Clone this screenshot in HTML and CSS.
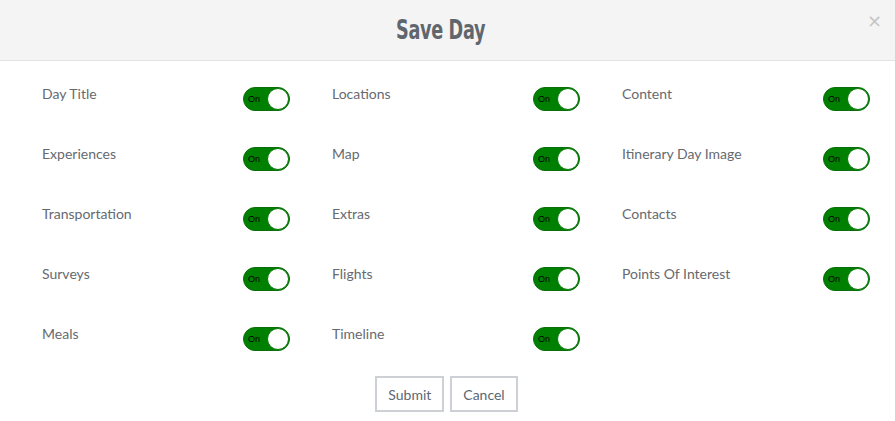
FILE: index.html
```html
<!DOCTYPE html>
<html>
<head>
<meta charset="utf-8">
<link rel="stylesheet" href="styles.css">
</head>
<body>
<div class="modal">
  <div class="header">
    <h1 class="title">Save Day</h1>
    <span class="close">×</span>
  </div>
  <div class="body">
    <div class="grid">
      <div class="item"><span class="label">Day Title</span><span class="toggle"><span class="on">On</span><span class="knob"></span></span></div>
      <div class="item"><span class="label">Locations</span><span class="toggle"><span class="on">On</span><span class="knob"></span></span></div>
      <div class="item"><span class="label">Content</span><span class="toggle"><span class="on">On</span><span class="knob"></span></span></div>
      <div class="item"><span class="label">Experiences</span><span class="toggle"><span class="on">On</span><span class="knob"></span></span></div>
      <div class="item"><span class="label">Map</span><span class="toggle"><span class="on">On</span><span class="knob"></span></span></div>
      <div class="item"><span class="label">Itinerary Day Image</span><span class="toggle"><span class="on">On</span><span class="knob"></span></span></div>
      <div class="item"><span class="label">Transportation</span><span class="toggle"><span class="on">On</span><span class="knob"></span></span></div>
      <div class="item"><span class="label">Extras</span><span class="toggle"><span class="on">On</span><span class="knob"></span></span></div>
      <div class="item"><span class="label">Contacts</span><span class="toggle"><span class="on">On</span><span class="knob"></span></span></div>
      <div class="item"><span class="label">Surveys</span><span class="toggle"><span class="on">On</span><span class="knob"></span></span></div>
      <div class="item"><span class="label">Flights</span><span class="toggle"><span class="on">On</span><span class="knob"></span></span></div>
      <div class="item"><span class="label">Points Of Interest</span><span class="toggle"><span class="on">On</span><span class="knob"></span></span></div>
      <div class="item"><span class="label">Meals</span><span class="toggle"><span class="on">On</span><span class="knob"></span></span></div>
      <div class="item"><span class="label">Timeline</span><span class="toggle"><span class="on">On</span><span class="knob"></span></span></div>
    </div>
    <div class="actions">
      <button class="btn">Submit</button>
      <button class="btn">Cancel</button>
    </div>
  </div>
</div>
</body>
</html>
```
FILE: styles.css
```css
html, body {
  margin: 0;
  padding: 0;
  background: #ffffff;
}
.modal {
  width: 895px;
  height: 421px;
  font-family: Lato, "Liberation Sans", sans-serif;
}
.header {
  position: relative;
  height: 60px;
  background: #f4f4f4;
  border-bottom: 1px solid #e3e3e3;
  display: flex;
  align-items: center;
  justify-content: center;
  padding-right: 13px;
}
.title {
  margin: 0;
  font-family: "DejaVu Sans", sans-serif;
  font-weight: bold;
  font-size: 26px;
  letter-spacing: -0.5px;
  color: #5f666d;
  transform: scaleX(0.68);
}
.close {
  position: absolute;
  right: 13px;
  top: 10px;
  font-size: 18px;
  color: #c4c4c4;
  font-family: "DejaVu Sans", sans-serif;
}
.body {
  padding: 26px 25px 0 42px;
}
.grid {
  display: grid;
  grid-template-columns: repeat(3, 248px);
  column-gap: 42px;
  row-gap: 36px;
}
.item {
  display: flex;
  justify-content: space-between;
  align-items: flex-start;
  height: 24px;
}
.label {
  font-size: 14px;
  color: #666a6f;
  line-height: 16px;
  margin-top: -1px;
}
.toggle {
  width: 47px;
  height: 24px;
  box-sizing: border-box;
  border-radius: 12px;
  background: #008000;
  border: 1px solid #0a6e0a;
  display: flex;
  align-items: center;
  justify-content: space-between;
  padding-left: 4px;
}
.on {
  font-family: "Liberation Sans", Arial, sans-serif;
  font-size: 9px;
  color: #000;
}
.knob {
  width: 22px;
  height: 22px;
  border-radius: 50%;
  background: #fff;
  box-sizing: border-box;
  border: 1px solid #0a7a0a;
}
.actions {
  display: flex;
  justify-content: center;
  gap: 6px;
  margin-top: 25px;
  padding-right: 19px;
}
.btn {
  height: 36px;
  padding: 0 11px;
  background: #fff;
  border: 2px solid #cdd1d5;
  font-family: Lato, "Liberation Sans", sans-serif;
  font-size: 14px;
  color: #5b6773;
}
```
